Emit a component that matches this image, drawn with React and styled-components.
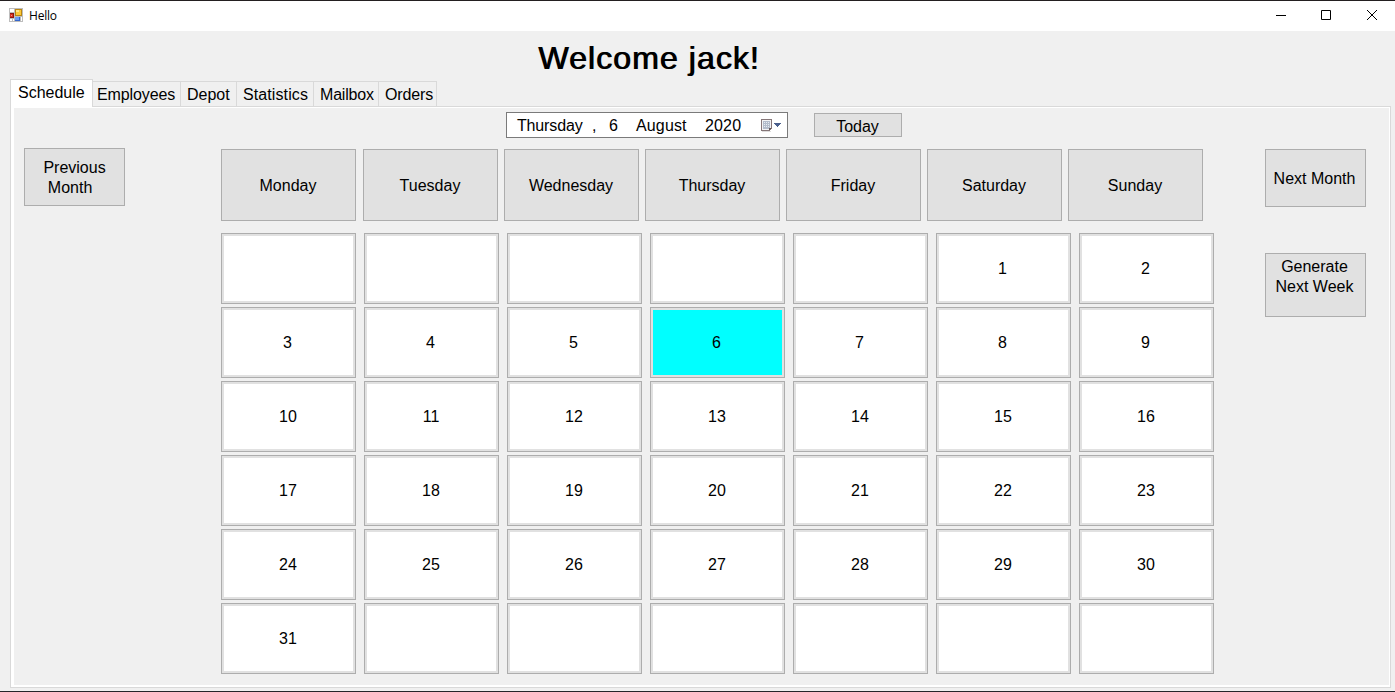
import React from "react";
import styled, { createGlobalStyle, css } from "styled-components";

const GlobalStyle = createGlobalStyle`
  * { box-sizing: border-box; }
  body { margin: 0; background: #f0f0f0; }
`;

const Window = styled.div`
  width: 1395px;
  height: 692px;
  display: flex;
  flex-direction: column;
  background: #f0f0f0;
  border-top: 1px solid #231f20;
  border-bottom: 1px solid #25252a;
  font: 16px/20px "Liberation Sans", Arial, sans-serif;
  color: #000;
  overflow: hidden;
`;

const TitleBar = styled.header`
  height: 30px;
  flex: none;
  display: flex;
  align-items: center;
  padding: 0 0 2px 9px;
  background: #fff;
`;

const Title = styled.span`
  margin-left: 6px;
  padding-top: 1px;
  font: 12px/16px "Open Sans", "Noto Sans", sans-serif;
  letter-spacing: -0.2px;
`;

const WindowControls = styled.div`
  display: flex;
  margin-left: auto;
`;

const ControlButton = styled.button`
  width: ${(p) => p.$width || 46}px;
  height: 28px;
  padding: 0;
  border: 0;
  background: none;
  display: flex;
  align-items: center;
  justify-content: center;
`;

const Heading = styled.h1`
  margin: 0;
  height: 48px;
  flex: none;
  padding: 8px 0 0 538px;
  font-size: 32px;
  line-height: 38px;
  font-weight: 400;
  letter-spacing: 1.08px;
  text-shadow: 1px 0 #000;
  white-space: nowrap;
`;

const TabStrip = styled.nav`
  height: 27px;
  flex: none;
  display: flex;
  align-items: flex-end;
  padding-left: 10px;
`;

const Tab = styled.button`
  width: ${(p) => p.$width}px;
  height: 25px;
  padding: 2px 0 0 ${(p) => p.$inset}px;
  border: solid #d9d9d9;
  border-width: 1px 1px 0 0;
  background: #f0f0f0;
  font: inherit;
  letter-spacing: ${(p) => p.$tracking || 0}px;
  color: #000;
  text-align: left;
  white-space: nowrap;
  ${(p) =>
    p.$active &&
    css`
      height: 27px;
      padding-bottom: 2px;
      border-left-width: 1px;
      background: #fff;
    `}
`;

const TabPage = styled.main`
  width: 1381px;
  height: 582px;
  flex: none;
  margin-left: 10px;
  border: 1px solid #d9d9d9;
  background: #fff;
  padding: 1px 1px 2px 3px;
`;

const TabBridge = styled.div`
  width: 81px;
  height: 1px;
  margin: -2px 0 1px -3px;
  background: #fff;
`;

const Page = styled.div`
  height: 577px;
  background: #f0f0f0;
  display: flex;
  flex-direction: column;
`;

const DateRow = styled.div`
  display: flex;
  align-items: flex-start;
  padding: 4px 0 0 492px;
  height: 40px;
  flex: none;
`;

const DatePicker = styled.div`
  width: 282px;
  height: 26px;
  border: 1px solid #7a7a7a;
  background: #fff;
  display: flex;
  align-items: center;
  padding: 2px 5px 0 10px;
  margin-right: 26px;
`;

const DatePart = styled.span`
  width: ${(p) => p.$width}px;
  flex: none;
  letter-spacing: ${(p) => p.$tracking || 0}px;
  white-space: nowrap;
`;

const Button = styled.button`
  width: ${(p) => p.$width}px;
  height: ${(p) => p.$height}px;
  flex: none;
  display: flex;
  align-items: ${(p) => p.$align || "center"};
  justify-content: center;
  padding: ${(p) => p.$padding || "2px 1px 0 0"};
  margin: ${(p) => p.$margin || "0"};
  border: 1px solid #adadad;
  background: #e1e1e1;
  font: inherit;
  color: #000;
  text-align: center;
  white-space: pre;
`;

const Content = styled.div`
  display: flex;
  align-items: flex-start;
  padding-left: 10px;
`;

const Calendar = styled.section`
  width: 993px;
  margin: 1px 51px 0 96px;
`;

const WeekHeader = styled.div`
  display: flex;
  gap: 6px;
  margin-bottom: 12px;
`;

const DayGrid = styled.div`
  display: grid;
  grid-template-columns: repeat(7, 135px);
  grid-auto-rows: 71px;
  gap: 3px 8px;
`;

const DayCell = styled.button`
  padding: 0 ${(p) => (p.$wide ? 1 : 2)}px 0 0;
  border: 1px solid #adadad;
  background: ${(p) => (p.$selected ? "#00ffff" : "#fff")};
  box-shadow: inset 0 0 0 2px #e1e1e1;
  font: inherit;
  color: #000;
`;

const SideActions = styled.aside`
  display: flex;
  flex-direction: column;
  gap: 46px;
  margin-top: 1px;
`;

const AppIcon = () => (
  <svg width="14" height="14" viewBox="0 0 14 14" shapeRendering="crispEdges">
    <path fill="#bdbdbd" d="M0 0h14v14H0z" />
    <path fill="#fff" d="M1 1h4v3H1zM1 11h2v2H1zM4 11h1v2H4zM12 9h1v4h-1z" />
    <path fill="#8e1710" d="M1 5h4v5H1z" />
    <path fill="#d8301f" d="M1 6h3v3H1z" />
    <path fill="#ef8f84" d="M2 7h1v1H2z" />
    <path fill="#b98612" d="M6 1h7v7H6z" />
    <path fill="#fcc937" d="M7 2h5v5H7z" />
    <path fill="#ffe58c" d="M7 2h3v2H7z" />
    <path fill="#3566cc" d="M6 9h5v4H6z" />
    <path fill="#6f9ff2" d="M6 9h4v3H6z" />
  </svg>
);

const CalendarIcon = () => (
  <svg width="20" height="14" viewBox="0 0 20 14" shapeRendering="crispEdges">
    <path fill="#dedcdc" d="M1 12h9v1H1z" />
    <path fill="#857678" d="M0 0h11v10h-1v1H9v1H0z" />
    <path fill="#f3f3f5" d="M1 1h9v8H8v2H1z" />
    <path fill="#b3bccb" d="M2 2h7v7H8v1H2z" />
    <path fill="#e6ebf2" d="M3 3h1v1H3zM5 3h1v1H5zM7 3h1v1H7zM3 5h1v1H3zM5 5h1v1H5zM7 5h1v1H7zM3 7h1v1H3zM5 7h1v1H5zM7 7h1v1H7z" />
    <path fill="#625456" d="M8 9h2v1H9v1H8z" />
    <path fill="#495e8c" d="M13 4h7v1h-7zM14 5h5v1h-5zM15 6h3v1h-3zM16 7h1v1h-1z" />
  </svg>
);

const TABS = [
  ["Schedule", 83, 7, 0],
  ["Employees", 88, 4, -0.12],
  ["Depot", 56, 6, 0],
  ["Statistics", 77, 6, 0.1],
  ["Mailbox", 65, 6, -0.2],
  ["Orders", 58, 6, -0.15],
];
const DAYS = ["Monday", "Tuesday", "Wednesday", "Thursday", "Friday", "Saturday", "Sunday"];
const CELLS = Array.from({ length: 42 }, (_, i) => (i > 4 && i < 36 ? i - 4 : null));

export default function App() {
  return (
    <>
      <GlobalStyle />
      <Window>
        <TitleBar>
          <AppIcon />
          <Title>Hello</Title>
          <WindowControls>
            <ControlButton $width={44} aria-label="Minimize">
              <svg width="11" height="10"><path fill="#000" d="M0 5h10v1H0z" /></svg>
            </ControlButton>
            <ControlButton aria-label="Maximize">
              <svg width="10" height="10"><path fill="none" stroke="#000" d="M.5.5h9v9h-9z" /></svg>
            </ControlButton>
            <ControlButton aria-label="Close">
              <svg width="10" height="10"><path stroke="#000" d="M0 0l10 10M10 0L0 10" /></svg>
            </ControlButton>
          </WindowControls>
        </TitleBar>
        <Heading>Welcome jack!</Heading>
        <TabStrip>
          {TABS.map(([label, width, inset, tracking], i) => (
            <Tab key={label} $width={width} $inset={inset} $tracking={tracking} $active={i === 0}>{label}</Tab>
          ))}
        </TabStrip>
        <TabPage>
          <TabBridge />
          <Page>
            <DateRow>
              <DatePicker>
                <DatePart $width={75} $tracking={-0.15}>Thursday</DatePart>
                <DatePart $width={17}>,</DatePart>
                <DatePart $width={27}>6</DatePart>
                <DatePart $width={69} $tracking={0.15}>August</DatePart>
                <DatePart $width={56} $tracking={0.15}>2020</DatePart>
                <CalendarIcon />
              </DatePicker>
              <Button $width={88} $height={24} $padding="4px 1px 0 0" $margin="1px 0 0">Today</Button>
            </DateRow>
            <Content>
              <Button $width={101} $height={58} $padding="2px 0 0">{"Previous\nMonth  "}</Button>
              <Calendar>
                <WeekHeader>
                  {DAYS.map((day, i) => (
                    <Button key={day} $width={135} $height={72} $margin={i === 0 ? "0 1px 0 0" : "0"}>{day}</Button>
                  ))}
                </WeekHeader>
                <DayGrid>
                  {CELLS.map((day, i) => (
                    <DayCell key={i} $selected={day === 6} $wide={day > 9}>{day}</DayCell>
                  ))}
                </DayGrid>
              </Calendar>
              <SideActions>
                <Button $width={101} $height={58} $padding="2px 2px 0 0">Next Month</Button>
                <Button $width={101} $height={64} $align="flex-start" $padding="3px 2px 0 0">{"Generate\nNext Week"}</Button>
              </SideActions>
            </Content>
          </Page>
        </TabPage>
      </Window>
    </>
  );
}
